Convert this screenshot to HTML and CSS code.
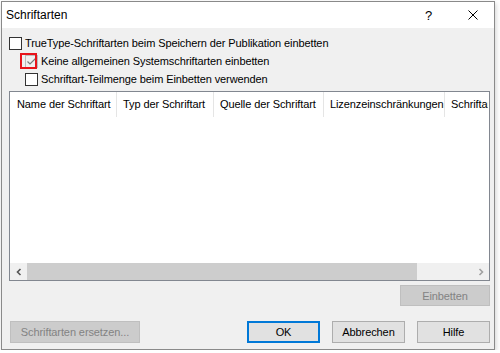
FILE: index.html
```html
<!DOCTYPE html>
<html lang="de">
<head>
    <meta charset="UTF-8">
    <title>Schriftarten</title>
    <link rel="stylesheet" href="styles.css">
</head>
<body>
    <div class="dialog">
        <div class="titlebar">
            <span class="title">Schriftarten</span>
            <span class="help-btn">?</span>
            <span class="close-btn">
                <svg width="10" height="10" viewBox="0 0 10 10">
                    <path d="M0.5 0.5 L9.5 9.5 M9.5 0.5 L0.5 9.5" stroke="#000" stroke-width="1" fill="none"/>
                </svg>
            </span>
        </div>

        <div class="options">
            <label class="option">
                <span class="check"></span>
                <span>TrueType-Schriftarten beim Speichern der Publikation einbetten</span>
            </label>
            <label class="option sub">
                <span class="check checked">
                    <svg width="11" height="11" viewBox="0 0 11 11">
                        <path d="M1.5 5.5 L4 8 L9.5 2.5" stroke="#7a7a7a" stroke-width="1.2" fill="none"/>
                    </svg>
                    <span class="marker"></span>
                </span>
                <span>Keine allgemeinen Systemschriftarten einbetten</span>
            </label>
            <label class="option sub">
                <span class="check"></span>
                <span>Schriftart-Teilmenge beim Einbetten verwenden</span>
            </label>
        </div>

        <div class="listview">
            <div class="list-header">
                <div class="col col-name">Name der Schriftart</div>
                <div class="col col-type">Typ der Schriftart</div>
                <div class="col col-source">Quelle der Schriftart</div>
                <div class="col col-license">Lizenzeinschränkungen</div>
                <div class="col col-rest">Schriftart</div>
            </div>
            <div class="list-body"></div>
            <div class="hscroll">
                <div class="arrow">
                    <svg width="8" height="8" viewBox="0 0 8 8">
                        <path d="M5.5 1 L2.5 4 L5.5 7" stroke="#555" stroke-width="1.6" fill="none"/>
                    </svg>
                </div>
                <div class="thumb"></div>
                <div class="track"></div>
                <div class="arrow">
                    <svg width="8" height="8" viewBox="0 0 8 8">
                        <path d="M2.5 1 L5.5 4 L2.5 7" stroke="#a0a0a0" stroke-width="1.6" fill="none"/>
                    </svg>
                </div>
            </div>
        </div>

        <div class="embed-row">
            <button class="btn disabled wide">Einbetten</button>
        </div>

        <div class="footer">
            <button class="btn disabled replace">Schriftarten ersetzen...</button>
            <div class="footer-right">
                <button class="btn default">OK</button>
                <button class="btn">Abbrechen</button>
                <button class="btn">Hilfe</button>
            </div>
        </div>
    </div>
</body>
</html>
```

FILE: styles.css
```css
body {
    margin: 0;
    background-color: #ffffff;
    font-family: 'Liberation Sans', Arial, sans-serif;
    font-size: 11px;
    letter-spacing: -0.1px;
    color: #000000;
}
.dialog {
    margin: 1px 0 0 1px;
    width: 494px;
    height: 349px;
    box-sizing: border-box;
    border: 1px solid #8a8a8a;
    background-color: #f0f0f0;
    display: flex;
    flex-direction: column;
    box-shadow: 1px 2px 5px rgba(0, 0, 0, 0.18);
}
.titlebar {
    height: 26px;
    background-color: #ffffff;
    display: flex;
    align-items: center;
    padding-left: 4px;
    font-size: 12px;
    letter-spacing: 0;
}
.title {
    flex: 1;
}
.help-btn {
    width: 10px;
    margin-right: 33px;
    font-size: 13px;
}
.close-btn {
    display: flex;
    margin-right: 16px;
}
.options {
    padding: 6px 0 0 7px;
}
.option {
    display: flex;
    align-items: center;
    height: 18px;
    gap: 3px;
}
.option.sub {
    padding-left: 16px;
}
.check {
    position: relative;
    width: 13px;
    height: 13px;
    box-sizing: border-box;
    border: 1px solid #333333;
    background-color: #ffffff;
    display: flex;
    align-items: center;
    justify-content: center;
}
.check.checked {
    border-color: #bcbcbc;
    background-color: #f0f0f0;
}
.marker {
    position: absolute;
    left: -6px;
    top: -3px;
    width: 17px;
    height: 16px;
    box-sizing: border-box;
    border: 2px solid #e8141b;
}
.listview {
    margin: 3px 4px 0 7px;
    height: 190px;
    box-sizing: border-box;
    border: 1px solid #828790;
    background-color: #ffffff;
    display: flex;
    flex-direction: column;
    overflow: hidden;
}
.list-header {
    display: flex;
    height: 25px;
    flex-shrink: 0;
}
.col {
    flex-shrink: 0;
    box-sizing: border-box;
    padding: 0 0 0 7px;
    line-height: 25px;
    border-right: 1px solid #e5e5e5;
    white-space: nowrap;
    overflow: hidden;
}
.col-name { width: 107px; }
.col-type { width: 97px; padding-left: 6px; }
.col-source { width: 110px; padding-left: 6px; }
.col-license { width: 121px; padding-left: 6px; }
.col-rest { width: 43px; padding-left: 6px; border-right: none; }
.list-body {
    flex: 1;
}
.hscroll {
    display: flex;
    height: 17px;
    background-color: #f0f0f0;
}
.arrow {
    width: 17px;
    display: flex;
    align-items: center;
    justify-content: center;
}
.thumb {
    width: 390px;
    background-color: #cdcdcd;
}
.track {
    flex: 1;
}
.embed-row {
    display: flex;
    justify-content: flex-end;
    padding: 4px 4px 0 0;
}
.btn {
    font-family: inherit;
    font-size: 11px;
    letter-spacing: -0.1px;
    height: 22px;
    width: 73px;
    padding: 0;
    background-color: #e1e1e1;
    border: 1px solid #adadad;
    color: #000000;
}
.btn.wide {
    width: 90px;
    height: 21px;
}
.btn.disabled {
    background-color: #cccccc;
    border-color: #bfbfbf;
    color: #838383;
}
.btn.default {
    border: 2px solid #0078d7;
}
.footer {
    display: flex;
    justify-content: space-between;
    padding: 15px 4px 0 8px;
}
.btn.replace {
    width: 130px;
}
.footer-right {
    display: flex;
    gap: 12px;
}
```
